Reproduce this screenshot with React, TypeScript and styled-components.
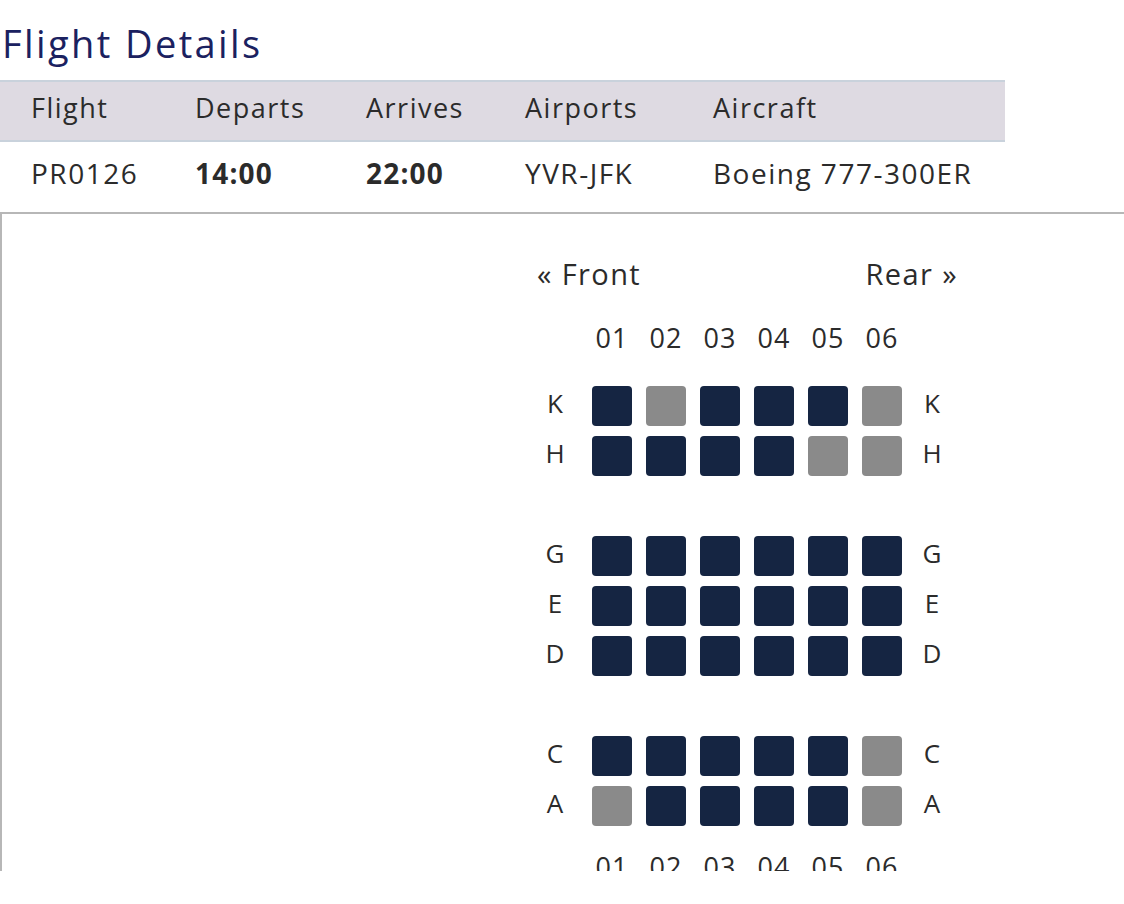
import React from 'react';
import styled, { createGlobalStyle } from 'styled-components';

const GlobalStyle = createGlobalStyle`
  html, body {
    margin: 0;
    padding: 0;
    background: #fff;
  }
  body {
    font-family: "Open Sans", Lato, Arial, sans-serif;
    color: #2b2b2b;
  }
`;

const Page = styled.div`
  width: 1124px;
  height: 904px;
  overflow: hidden;
`;

const Title = styled.h1`
  margin: 0;
  height: 80px;
  padding: 21px 0 0 2px;
  box-sizing: border-box;
  font-size: 38px;
  font-weight: 400;
  line-height: 44px;
  letter-spacing: 2.4px;
  color: #1b2160;
`;

const Table = styled.div`
  width: 1005px;
`;

const TableRow = styled.div<{ $head?: boolean }>`
  display: grid;
  grid-template-columns: 164px 171px 159px 188px 323px;
  align-items: center;
  box-sizing: border-box;
  height: ${(p) => (p.$head ? '62px' : '70px')};
  background: ${(p) => (p.$head ? '#dedae2' : 'transparent')};
  border-top: ${(p) => (p.$head ? '2px solid #c9d2dc' : 'none')};
  border-bottom: ${(p) => (p.$head ? '2px solid #c9d2dc' : 'none')};
  padding-bottom: ${(p) => (p.$head ? '8px' : '8px')};
  font-size: ${(p) => (p.$head ? '27px' : '28px')};
`;

const Cell = styled.div<{ $bold?: boolean }>`
  padding-left: 31px;
  font-weight: ${(p) => (p.$bold ? 700 : 400)};
  letter-spacing: ${(p) => (p.$bold ? '1.2px' : '1.5px')};
  color: #2b2b2b;
  white-space: nowrap;
`;

const Panel = styled.div`
  height: 659px;
  box-sizing: border-box;
  border-top: 2px solid #b7b7b7;
  border-left: 2px solid #b7b7b7;
  overflow: hidden;
`;

const SeatMap = styled.div`
  margin-left: 535px;
  width: 421px;
  padding-top: 45px;
`;

const Direction = styled.div`
  display: flex;
  justify-content: space-between;
  font-size: 29px;
  line-height: 30px;
  height: 30px;
  letter-spacing: 1.4px;
  color: #2b2b2b;
`;

const Numbers = styled.div<{ $top: number }>`
  display: flex;
  margin-top: ${(p) => p.$top}px;
  padding-left: 55px;
  gap: 14px;
`;

const Number = styled.div`
  width: 40px;
  text-align: center;
  font-size: 27px;
  line-height: 30px;
  letter-spacing: 1px;
  color: #2b2b2b;
  white-space: nowrap;
`;

const Group = styled.div<{ $top: number }>`
  display: flex;
  flex-direction: column;
  gap: 10px;
  margin-top: ${(p) => p.$top}px;
`;

const SeatRow = styled.div`
  display: flex;
  align-items: center;
  height: 40px;
`;

const RowLabel = styled.div<{ $right?: boolean }>`
  width: 36px;
  text-align: center;
  font-size: 26px;
  line-height: 36px;
  padding-bottom: 6px;
  color: #2b2b2b;
  margin-left: ${(p) => (p.$right ? '12px' : '0')};
  margin-right: ${(p) => (p.$right ? '0' : '19px')};
`;

const Seats = styled.div`
  display: flex;
  gap: 14px;
`;

const Seat = styled.div<{ $taken?: boolean }>`
  width: 40px;
  height: 40px;
  border-radius: 4px;
  background: ${(p) => (p.$taken ? '#8a8a8a' : '#152542')};
`;

const cols = ['01', '02', '03', '04', '05', '06'];

// 1 = available (navy), 0 = taken (grey)
const groups: { row: string; seats: number[] }[][] = [
  [
    { row: 'K', seats: [1, 0, 1, 1, 1, 0] },
    { row: 'H', seats: [1, 1, 1, 1, 0, 0] },
  ],
  [
    { row: 'G', seats: [1, 1, 1, 1, 1, 1] },
    { row: 'E', seats: [1, 1, 1, 1, 1, 1] },
    { row: 'D', seats: [1, 1, 1, 1, 1, 1] },
  ],
  [
    { row: 'C', seats: [1, 1, 1, 1, 1, 0] },
    { row: 'A', seats: [0, 1, 1, 1, 1, 0] },
  ],
];

const App: React.FC = () => {
  return (
    <Page>
      <GlobalStyle />
      <Title>Flight Details</Title>
      <Table>
        <TableRow $head>
          <Cell>Flight</Cell>
          <Cell>Departs</Cell>
          <Cell>Arrives</Cell>
          <Cell>Airports</Cell>
          <Cell>Aircraft</Cell>
        </TableRow>
        <TableRow>
          <Cell>PR0126</Cell>
          <Cell $bold>14:00</Cell>
          <Cell $bold>22:00</Cell>
          <Cell>YVR-JFK</Cell>
          <Cell>Boeing 777-300ER</Cell>
        </TableRow>
      </Table>
      <Panel>
        <SeatMap>
          <Direction>
            <span>« Front</span>
            <span>Rear »</span>
          </Direction>
          <Numbers $top={34}>
            {cols.map((c) => (
              <Number key={c}>{c}</Number>
            ))}
          </Numbers>
          {groups.map((group, i) => (
            <Group key={i} $top={i === 0 ? 33 : 60}>
              {group.map((r) => (
                <SeatRow key={r.row}>
                  <RowLabel>{r.row}</RowLabel>
                  <Seats>
                    {r.seats.map((s, j) => (
                      <Seat key={j} $taken={s === 0} />
                    ))}
                  </Seats>
                  <RowLabel $right>{r.row}</RowLabel>
                </SeatRow>
              ))}
            </Group>
          ))}
          <Numbers $top={26}>
            {cols.map((c) => (
              <Number key={c}>{c}</Number>
            ))}
          </Numbers>
        </SeatMap>
      </Panel>
    </Page>
  );
};

export default App;
